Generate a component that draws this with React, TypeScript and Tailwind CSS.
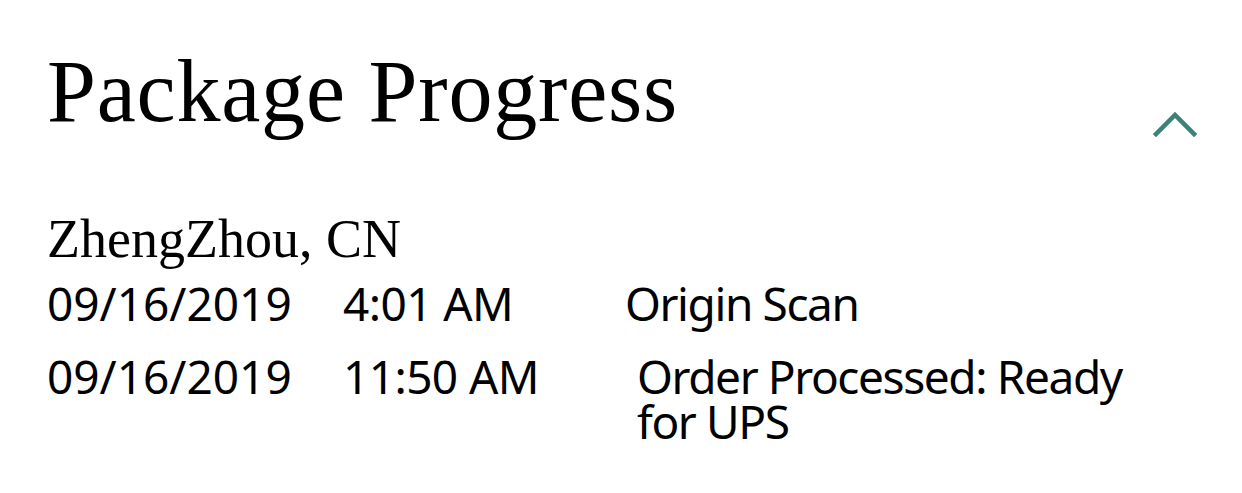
import React from 'react'

type ScanEvent = {
  date: string
  time: string
  activity: string
  timeWidth: string
}

const events: ScanEvent[] = [
  { date: '09/16/2019', time: '4:01 AM', activity: 'Origin Scan', timeWidth: 'w-[282px]' },
  { date: '09/16/2019', time: '11:50 AM', activity: 'Order Processed: Ready for UPS', timeWidth: 'w-[294px]' },
]

const ChevronUp: React.FC = () => (
  <svg width="44" height="28" viewBox="0 0 44 28" fill="none" className="block">
    <polyline points="3,24 22,5 41,24" stroke="#3b8278" strokeWidth="4.5" strokeLinecap="square" />
  </svg>
)

export default function App() {
  return (
    <div className="min-h-screen w-full bg-white text-black">
      <div className="pl-[47px] pr-[45px] pt-[48px]">
        {/* Header */}
        <div className="flex items-start justify-between">
          <h1 className="font-['Liberation_Serif',serif] text-[88px] leading-[88px] tracking-[0.8px]">
            Package Progress
          </h1>
          <div className="mt-[62px]">
            <ChevronUp />
          </div>
        </div>

        {/* Location */}
        <div className="mt-[74px] font-['Liberation_Serif',serif] text-[54px] leading-[54px]">
          ZhengZhou, CN
        </div>

        {/* Scan rows */}
        <div className="mt-[15px] flex flex-col gap-[28px] font-['Noto_Sans',sans-serif] text-[46px] leading-[45px]">
          {events.map((e, i) => (
            <div key={i} className="flex items-start">
              <div className="w-[296px] shrink-0">{e.date}</div>
              <div className={`${e.timeWidth} shrink-0 tracking-[-0.6px]`}>{e.time}</div>
              <div className="w-[520px] tracking-[-1.4px]">{e.activity}</div>
            </div>
          ))}
        </div>
      </div>
    </div>
  )
}
